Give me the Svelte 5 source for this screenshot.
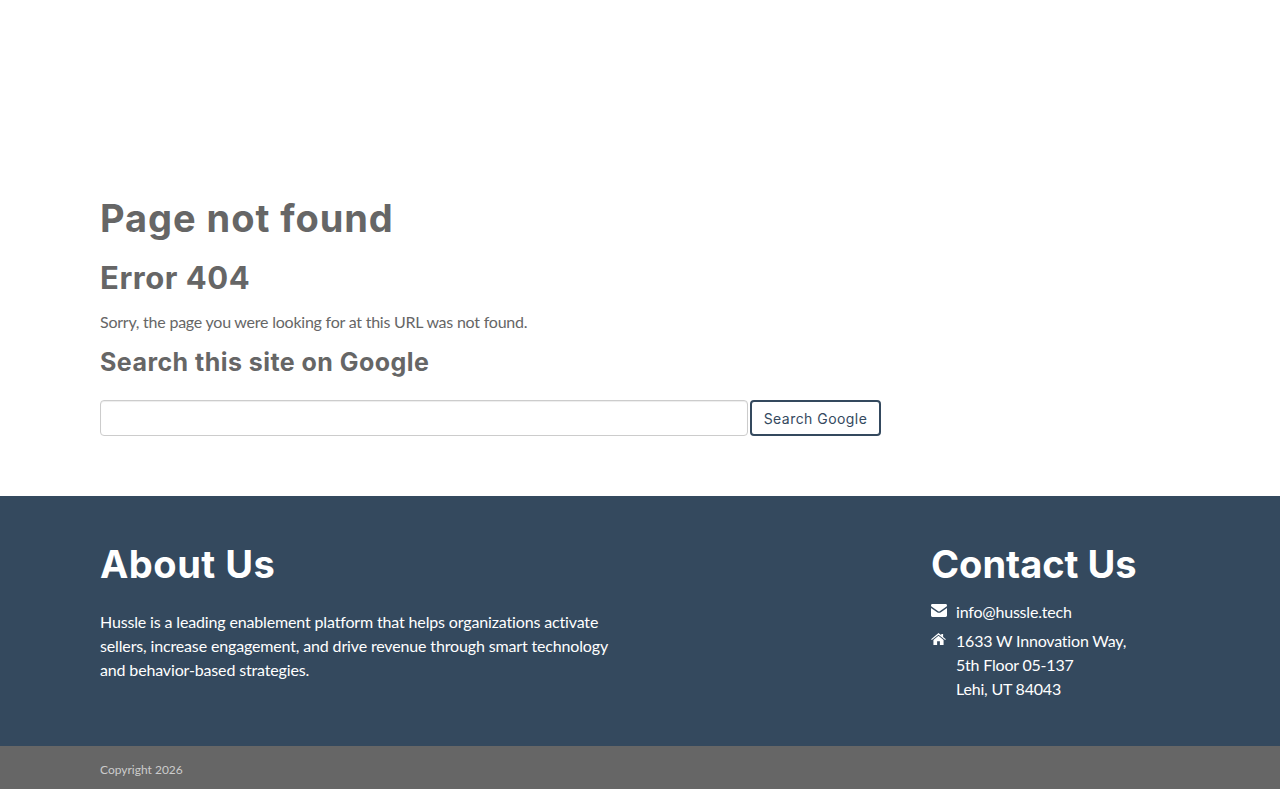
<script>
  const aboutText =
    'Hussle is a leading enablement platform that helps organizations activate sellers, increase engagement, and drive revenue through smart technology and behavior-based strategies.'
</script>

<main class="content">
  <h1>Page not found</h1>
  <h2>Error 404</h2>
  <p>Sorry, the page you were looking for at this URL was not found.</p>
  <h3>Search this site on Google</h3>
  <form class="search" onsubmit={(e) => e.preventDefault()}>
    <input type="text" aria-label="Search" />
    <button type="submit">Search Google</button>
  </form>
</main>

<footer class="footer">
  <div class="about">
    <h2>About Us</h2>
    <p>{aboutText}</p>
  </div>
  <div class="contact">
    <h2>Contact Us</h2>
    <div class="row email">
      <svg class="icon" viewBox="0 0 16 13" width="16" height="13" aria-hidden="true">
        <path d="M1.4 0h13.2C15.4 0 16 .6 16 1.4c0 .6-.3 1-.8 1.4L8.800 7.200c-.5.3-1.100.3-1.600 0L.8 2.800C.3 2.400 0 2 0 1.400 0 .6.6 0 1.400 0z" />
        <path d="M0 4v7.600C0 12.400.6 13 1.400 13h13.200c.8 0 1.400-.6 1.400-1.400V4L9.500 8.400c-.9.6-2.100.6-3 0z" />
      </svg>
      <span>info@hussle.tech</span>
    </div>
    <div class="row">
      <svg class="icon home" viewBox="0 0 16 13" width="15" height="12" aria-hidden="true">
        <path d="M8 0l3 2.500V1h2v3.200L16 6.800l-.8.9L8 1.800.8 7.700 0 6.800z" />
        <path d="M8 3l5.500 4.500V13H9.500V9h-3v4H2.500V7.500z" />
      </svg>
      <span>1633 W Innovation Way,<br />5th Floor 05-137<br />Lehi, UT 84043</span>
    </div>
  </div>
</footer>

<div class="copyright">Copyright 2026</div>

<style>
  :global(body) {
    margin: 0;
    background: #fff;
    font-family: Lato, 'Liberation Sans', sans-serif;
    font-size: 16px;
    line-height: 24px;
    color: #666;
  }
  .content {
    padding: 194px 100px 60px;
  }
  h1,
  h2,
  h3 {
    margin: 0;
    font-family: Inter, 'Open Sans', sans-serif;
    font-weight: 700;
  }
  h1 {
    font-size: 38px;
    line-height: 48px;
    letter-spacing: 0.94px;
    margin-bottom: 16px;
  }
  .content h2 {
    font-size: 31px;
    line-height: 40px;
    letter-spacing: 0.55px;
    margin-bottom: 12px;
  }
  .content p {
    margin: 0 0 12px;
    letter-spacing: -0.23px;
  }
  h3 {
    font-size: 25px;
    line-height: 32px;
    letter-spacing: 0.46px;
    margin-bottom: 22px;
  }
  .search {
    display: flex;
    align-items: stretch;
    gap: 2px;
    height: 36px;
  }
  input {
    width: 648px;
    box-sizing: border-box;
    border: 1px solid #ccc;
    border-radius: 4px;
    box-shadow: inset 0 1px 1px rgba(0, 0, 0, 0.075);
    background: #fff;
    padding: 0 12px;
  }
  button {
    width: 131px;
    box-sizing: border-box;
    padding: 0;
    background: #fff;
    border: 2px solid #34495e;
    border-radius: 4px;
    color: #34495e;
    font-family: Inter, 'Open Sans', sans-serif;
    font-size: 14px;
    letter-spacing: 0.45px;
  }
  .footer {
    display: flex;
    justify-content: space-between;
    background: #34495e;
    color: #fff;
    height: 250px;
    box-sizing: border-box;
    padding: 44px 100px 0;
    letter-spacing: -0.2px;
  }
  .about {
    width: 520px;
  }
  .footer h2 {
    font-size: 38px;
    line-height: 48px;
    letter-spacing: 0.5px;
    margin-bottom: 22px;
  }
  .about p {
    margin: 0;
    letter-spacing: -0.15px;
  }
  .contact {
    width: 249px;
  }
  .contact h2 {
    letter-spacing: 0;
    margin-bottom: 12px;
  }
  .row {
    display: flex;
    align-items: flex-start;
    margin-bottom: 5px;
  }
  .row span {
    flex: 1;
  }
  .icon {
    fill: #fff;
    flex: none;
    width: 16px;
    margin-top: 4px;
    margin-right: 9px;
  }
  .home {
    width: 15px;
    margin-right: 10px;
  }
  .copyright {
    background: #666;
    color: #ccc;
    font-size: 12px;
    height: 43px;
    line-height: 47px;
    padding-left: 100px;
  }
</style>
